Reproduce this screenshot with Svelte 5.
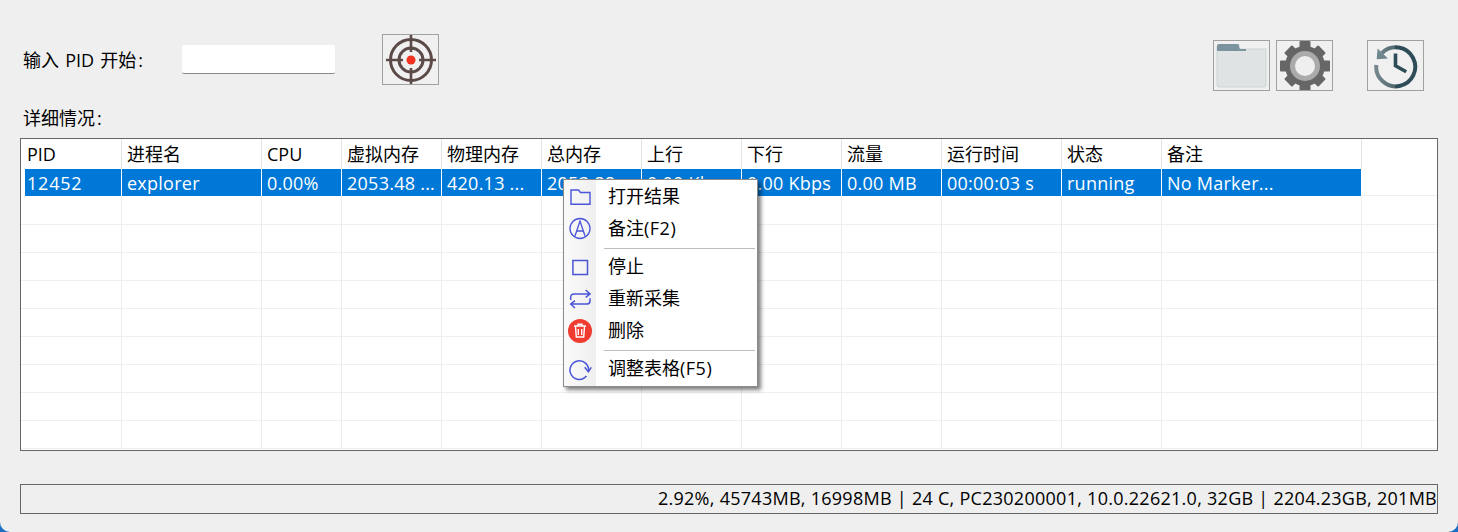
<script>
	const columns = ['PID', '进程名', 'CPU', '虚拟内存', '物理内存', '总内存', '上行', '下行', '流量', '运行时间', '状态', '备注', ''];
	const selected = ['12452', 'explorer', '0.00%', '2053.48 ...', '420.13 ...', '2053.88 ...', '0.00 Kbps', '0.00 Kbps', '0.00 MB', '00:00:03 s', 'running', 'No Marker...', ''];
	const emptyRows = Array(9).fill(0);
	const gearTeeth = [0, 45, 90, 135];
	const status = '2.92%, 45743MB, 16998MB | 24 C, PC230200001, 10.0.22621.0, 32GB | 2204.23GB, 201MB';
</script>

<div class="window">
	<div class="top">
		<span class="pid-label">输入 PID 开始<span class="colon">:</span></span>
		<input class="pid-input" type="text" />
		<button class="icon-btn target" aria-label="target">
			<svg width="50" height="50" viewBox="0 0 50 50" fill="none" stroke="#5b4a48">
				<circle cx="25" cy="25" r="20.500" stroke-width="3" />
				<circle cx="25" cy="25" r="12" stroke-width="3" />
				<path d="M25 0V17M25 33V50M0 25H17M33 25H50" stroke-width="2.600" />
				<circle cx="25" cy="25" r="4.500" fill="#f0321e" stroke="none" />
			</svg>
		</button>
		<div class="tools">
			<button class="icon-btn" aria-label="folder">
				<svg width="52" height="48" viewBox="0 0 52 48">
					<path d="M1 5a2 2 0 0 1 2-2h19l2 4h26v36a2 2 0 0 1-2 2H3a2 2 0 0 1-2-2z" fill="#dfe3e4" stroke="#ccd5d8" />
					<path d="M1 9V4a2 2 0 0 1 2-2h18a2 2 0 0 1 2 3l1 2h6v2z" fill="#7b929f" />
				</svg>
			</button>
			<button class="icon-btn gear" aria-label="settings">
				<svg width="52" height="50" viewBox="0 0 52 50">
					<circle cx="26" cy="25" r="20" fill="#666" />
					{#each gearTeeth as angle}
						<rect
							x="20.500"
							y={angle % 90 === 0 ? 0 : 1}
							width="11"
							height={angle % 90 === 0 ? 50 : 48}
							rx="1"
							fill="#666"
							transform="rotate({angle} 26 25)"
						/>
					{/each}
					<circle cx="26" cy="25" r="15" fill="#aaa" />
					<circle cx="26" cy="25" r="10" fill="#efefef" />
				</svg>
			</button>
			<button class="icon-btn history" aria-label="history">
				<svg width="48" height="48" viewBox="0 0 48 48" fill="none">
					<defs>
						<linearGradient id="fade" gradientUnits="userSpaceOnUse" x1="3" x2="44" y1="0" y2="0">
							<stop offset="0" stop-color="#76898f" />
							<stop offset="0.49" stop-color="#51696f" />
							<stop offset="0.5" stop-color="#2f4c59" />
							<stop offset="1" stop-color="#2f4c59" />
						</linearGradient>
					</defs>
					<path d="M10 11A19.500 19.500 0 1 1 4.300 23" stroke="url(#fade)" stroke-width="4" />
					<path d="M6.200 8.200L5.500 16.500 14.200 15.800z" fill="#6f868f" stroke="#6f868f" stroke-width="1.500" />
					<path d="M23.500 11.500V23.800L34.200 29.800" stroke="#2f4c59" stroke-width="3.600" />
				</svg>
			</button>
		</div>
	</div>

	<div class="details-label">详细情况<span class="colon">:</span></div>

	<div class="table">
		<div class="row head">
			{#each columns as c}
				<div class="cell">{c}</div>
			{/each}
		</div>
		<div class="row current">
			{#each selected as c, i}
				<div class="cell" class:filler={i === 12}>{c}</div>
			{/each}
		</div>
		{#each emptyRows as _}
			<div class="row blank">
				{#each columns as c}
					<div class="cell"></div>
				{/each}
			</div>
		{/each}

		<div class="menu">
			<div class="gutter"></div>
			<div class="item">
				<svg class="ico" width="24" height="24" viewBox="0 0 24 24" fill="none" stroke="#4a55d8" stroke-width="1.400">
					<path d="M3 20.300V6h7.500l2 2.500H22v11.800z" />
				</svg>
				打开结果
			</div>
			<div class="item">
				<svg class="ico" width="24" height="24" viewBox="0 0 24 24" fill="none" stroke="#4a55d8" stroke-width="1.300">
					<circle cx="12" cy="12.500" r="10" />
					<path d="M7 20L12 5l5 15M9 15h6" />
				</svg>
				<span>备注<span class="key">(F2)</span></span>
			</div>
			<div class="sep"></div>
			<div class="item">
				<svg class="ico" width="24" height="24" viewBox="0 0 24 24" fill="none" stroke="#4a55d8" stroke-width="1.500">
					<rect x="4.900" y="6.500" width="14.600" height="14" />
				</svg>
				停止
			</div>
			<div class="item">
				<svg class="ico" width="24" height="24" viewBox="0 0 24 24" fill="none" stroke="#4a55d8" stroke-width="1.500">
					<path d="M2.700 14V11a3 3 0 0 1 3.300-3h16M17.700 4L22 8l-4.300 3.300M22 12.300V15a3 3 0 0 1-2.700 3H2.700M7 14.700L2.700 18 7 22" />
				</svg>
				重新采集
			</div>
			<div class="item">
				<svg class="ico" width="24" height="24" viewBox="0 0 24 24">
					<circle cx="12" cy="13" r="12" fill="#f03c30" />
					<path d="M6 8h12M10 8V6.300h4V8M7.500 8.500l.8 10.500h7.400l.8-10.500M10.300 11v6M13.700 11v6" fill="none" stroke="#fff" stroke-width="1.400" />
				</svg>
				删除
			</div>
			<div class="sep"></div>
			<div class="item">
				<svg class="ico" width="24" height="24" viewBox="0 0 24 24" fill="none" stroke="#4a55d8" stroke-width="1.500">
					<path d="M18.500 20A9.300 9.300 0 1 1 20.500 15.500" />
					<path d="M16.700 11.300L20.300 15.700 23.300 11.300" />
				</svg>
				<span>调整表格<span class="key">(F5)</span></span>
			</div>
		</div>
	</div>

	<div class="status">{status}</div>
</div>

<style>
	:global(body) {
		margin: 0;
		background: #1a6fc4;
	}

	.window {
		box-sizing: border-box;
		width: 1458px;
		height: 532px;
		background: #efefef;
		border-radius: 0 0 10px 10px;
		padding: 34px 20px 0;
		font-family: "Open Sans", "Noto Sans CJK SC", sans-serif;
		font-size: 18px;
		color: #000;
		overflow: hidden;
	}

	.top {
		display: flex;
		align-items: flex-start;
		height: 57px;
	}

	.pid-label {
		margin: 12px 0 0 3px;
		width: 159px;
		line-height: 28px;
		word-spacing: 1.500px;
	}

	.colon {
		margin-left: 2px;
	}

	.pid-input {
		box-sizing: border-box;
		width: 153px;
		height: 29px;
		margin-top: 11px;
		border: none;
		border-bottom: 1px solid #8a8a8a;
		border-radius: 2px;
		background: #fff;
		padding: 0;
	}

	.icon-btn {
		box-sizing: border-box;
		display: flex;
		align-items: center;
		justify-content: center;
		width: 57px;
		height: 51px;
		padding: 0;
		background: #f0f0f0;
		border: 1px solid #a0a0a0;
		overflow: hidden;
	}

	.target {
		margin-left: 47px;
	}

	.tools {
		display: flex;
		margin: 6px 14px 0 auto;
		gap: 6px;
	}

	.history {
		margin-left: 28px;
	}

	.details-label {
		margin: 14px 0 0 3px;
		height: 33px;
		line-height: 26px;
	}

	.table {
		position: relative;
		box-sizing: border-box;
		height: 313px;
		background: #fff;
		border: 1px solid #666;
		overflow: visible;
	}

	.row {
		display: grid;
		grid-template-columns: 101px 140px 80px 100px 100px 100px 100px 100px 100px 120px 100px 200px 75px;
		height: 28px;
	}

	.cell {
		box-sizing: border-box;
		border-right: 1px solid #ececec;
		padding-left: 5px;
		line-height: 28px;
		white-space: nowrap;
		overflow: hidden;
	}

	.cell:first-child {
		padding-left: 6px;
	}

	.cell:last-child {
		border-right: none;
	}

	.head {
		height: 30px;
	}

	.head .cell {
		border-right-color: #e3e3e3;
		line-height: 31px;
	}

	.current .cell {
		background: #0078d7;
		color: #fff;
		border-right-color: #fff;
		height: 27px;
		line-height: 29px;
		letter-spacing: 0.250px;
	}

	.current .cell:first-child {
		margin-left: 4px;
		padding-left: 2px;
		letter-spacing: 0.800px;
	}

	.current .cell.filler {
		background: none;
	}

	.blank .cell,
	.current .cell.filler {
		border-bottom: 1px solid #efefef;
	}

	.menu {
		position: absolute;
		left: 542px;
		top: 40px;
		box-sizing: border-box;
		width: 195px;
		height: 208px;
		padding: 1px 1px 2px;
		background: #fff;
		border: 1px solid #8a8a8a;
		box-shadow: 3px 3px 4px rgba(0, 0, 0, 0.5);
	}

	.gutter {
		position: absolute;
		left: 0;
		top: 0;
		bottom: 0;
		width: 32px;
		background: linear-gradient(to right, #fafafa, #efefef);
	}

	.item {
		position: relative;
		box-sizing: border-box;
		display: flex;
		align-items: center;
		height: 32px;
		padding: 0 0 2px 43px;
		line-height: 30px;
	}

	.key {
		letter-spacing: 0.500px;
	}

	.ico {
		position: absolute;
		left: 3px;
		top: 3px;
		overflow: visible;
	}

	.sep {
		position: relative;
		height: 1px;
		margin: 3px 1px 2px 39px;
		background: #bdbdbd;
	}

	.status {
		box-sizing: border-box;
		height: 30px;
		margin-top: 33px;
		border: 1px solid #666;
		text-align: right;
		line-height: 27px;
		letter-spacing: 0.270px;
		white-space: nowrap;
		overflow: hidden;
	}
</style>
